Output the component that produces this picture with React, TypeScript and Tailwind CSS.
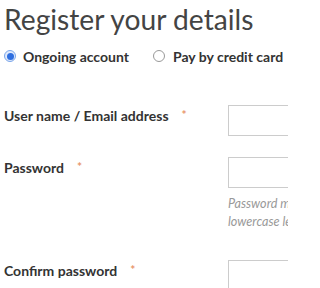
import React from "react";

function Req() {
  return <span className="ml-[13px] text-[12px] text-[#e8956a] relative -top-[2px]">*</span>;
}

export default function App() {
  return (
    <div className="w-[288px] h-[288px] overflow-hidden bg-white pl-[4px] font-['Lato',sans-serif] text-[#333]">
      <h1 className="text-[28.2px] leading-[34px] pt-[2px] text-[#444] font-normal whitespace-nowrap">Register your details</h1>
      <div className="flex items-center mt-[9px] h-[22px] whitespace-nowrap">
        <span className="w-[12px] h-[12px] rounded-full border border-[#7aa6ea] bg-[#dfe9fb] flex items-center justify-center">
          <span className="w-[7px] h-[7px] rounded-full bg-[#2f6fe0]"></span>
        </span>
        <span className="ml-[7px] text-[14px] font-bold">Ongoing account</span>
        <span className="ml-[24px] w-[12px] h-[12px] rounded-full border border-[#999] bg-white"></span>
        <span className="ml-[8px] text-[14px] font-bold">Pay by credit card</span>
      </div>
      <div className="mt-[38px] flex flex-col">
        <div className="flex items-start whitespace-nowrap h-[31px]">
          <div className="w-[224px] shrink-0 text-[14px] font-bold leading-[20px] pt-[1px]">User name / Email address<Req /></div>
          <div className="w-[120px] h-[31px] border border-[#ccc] shrink-0"></div>
        </div>
        <div className="flex items-start whitespace-nowrap mt-[21px]">
          <div className="w-[224px] shrink-0 text-[14px] font-bold leading-[20px] pt-[1px]">Password<Req /></div>
          <div className="flex flex-col shrink-0">
            <div className="w-[120px] h-[31px] border border-[#ccc] shrink-0"></div>
            <div className="text-[12.6px] italic text-[#999] leading-[18px] mt-[7px]">Password must contain<br />lowercase letters</div>
          </div>
        </div>
        <div className="flex items-start whitespace-nowrap h-[31px] mt-[29px]">
          <div className="w-[224px] shrink-0 text-[14px] font-bold leading-[20px] pt-[1px]">Confirm password<Req /></div>
          <div className="w-[120px] h-[31px] border border-[#ccc] shrink-0"></div>
        </div>
      </div>
    </div>
  );
}
